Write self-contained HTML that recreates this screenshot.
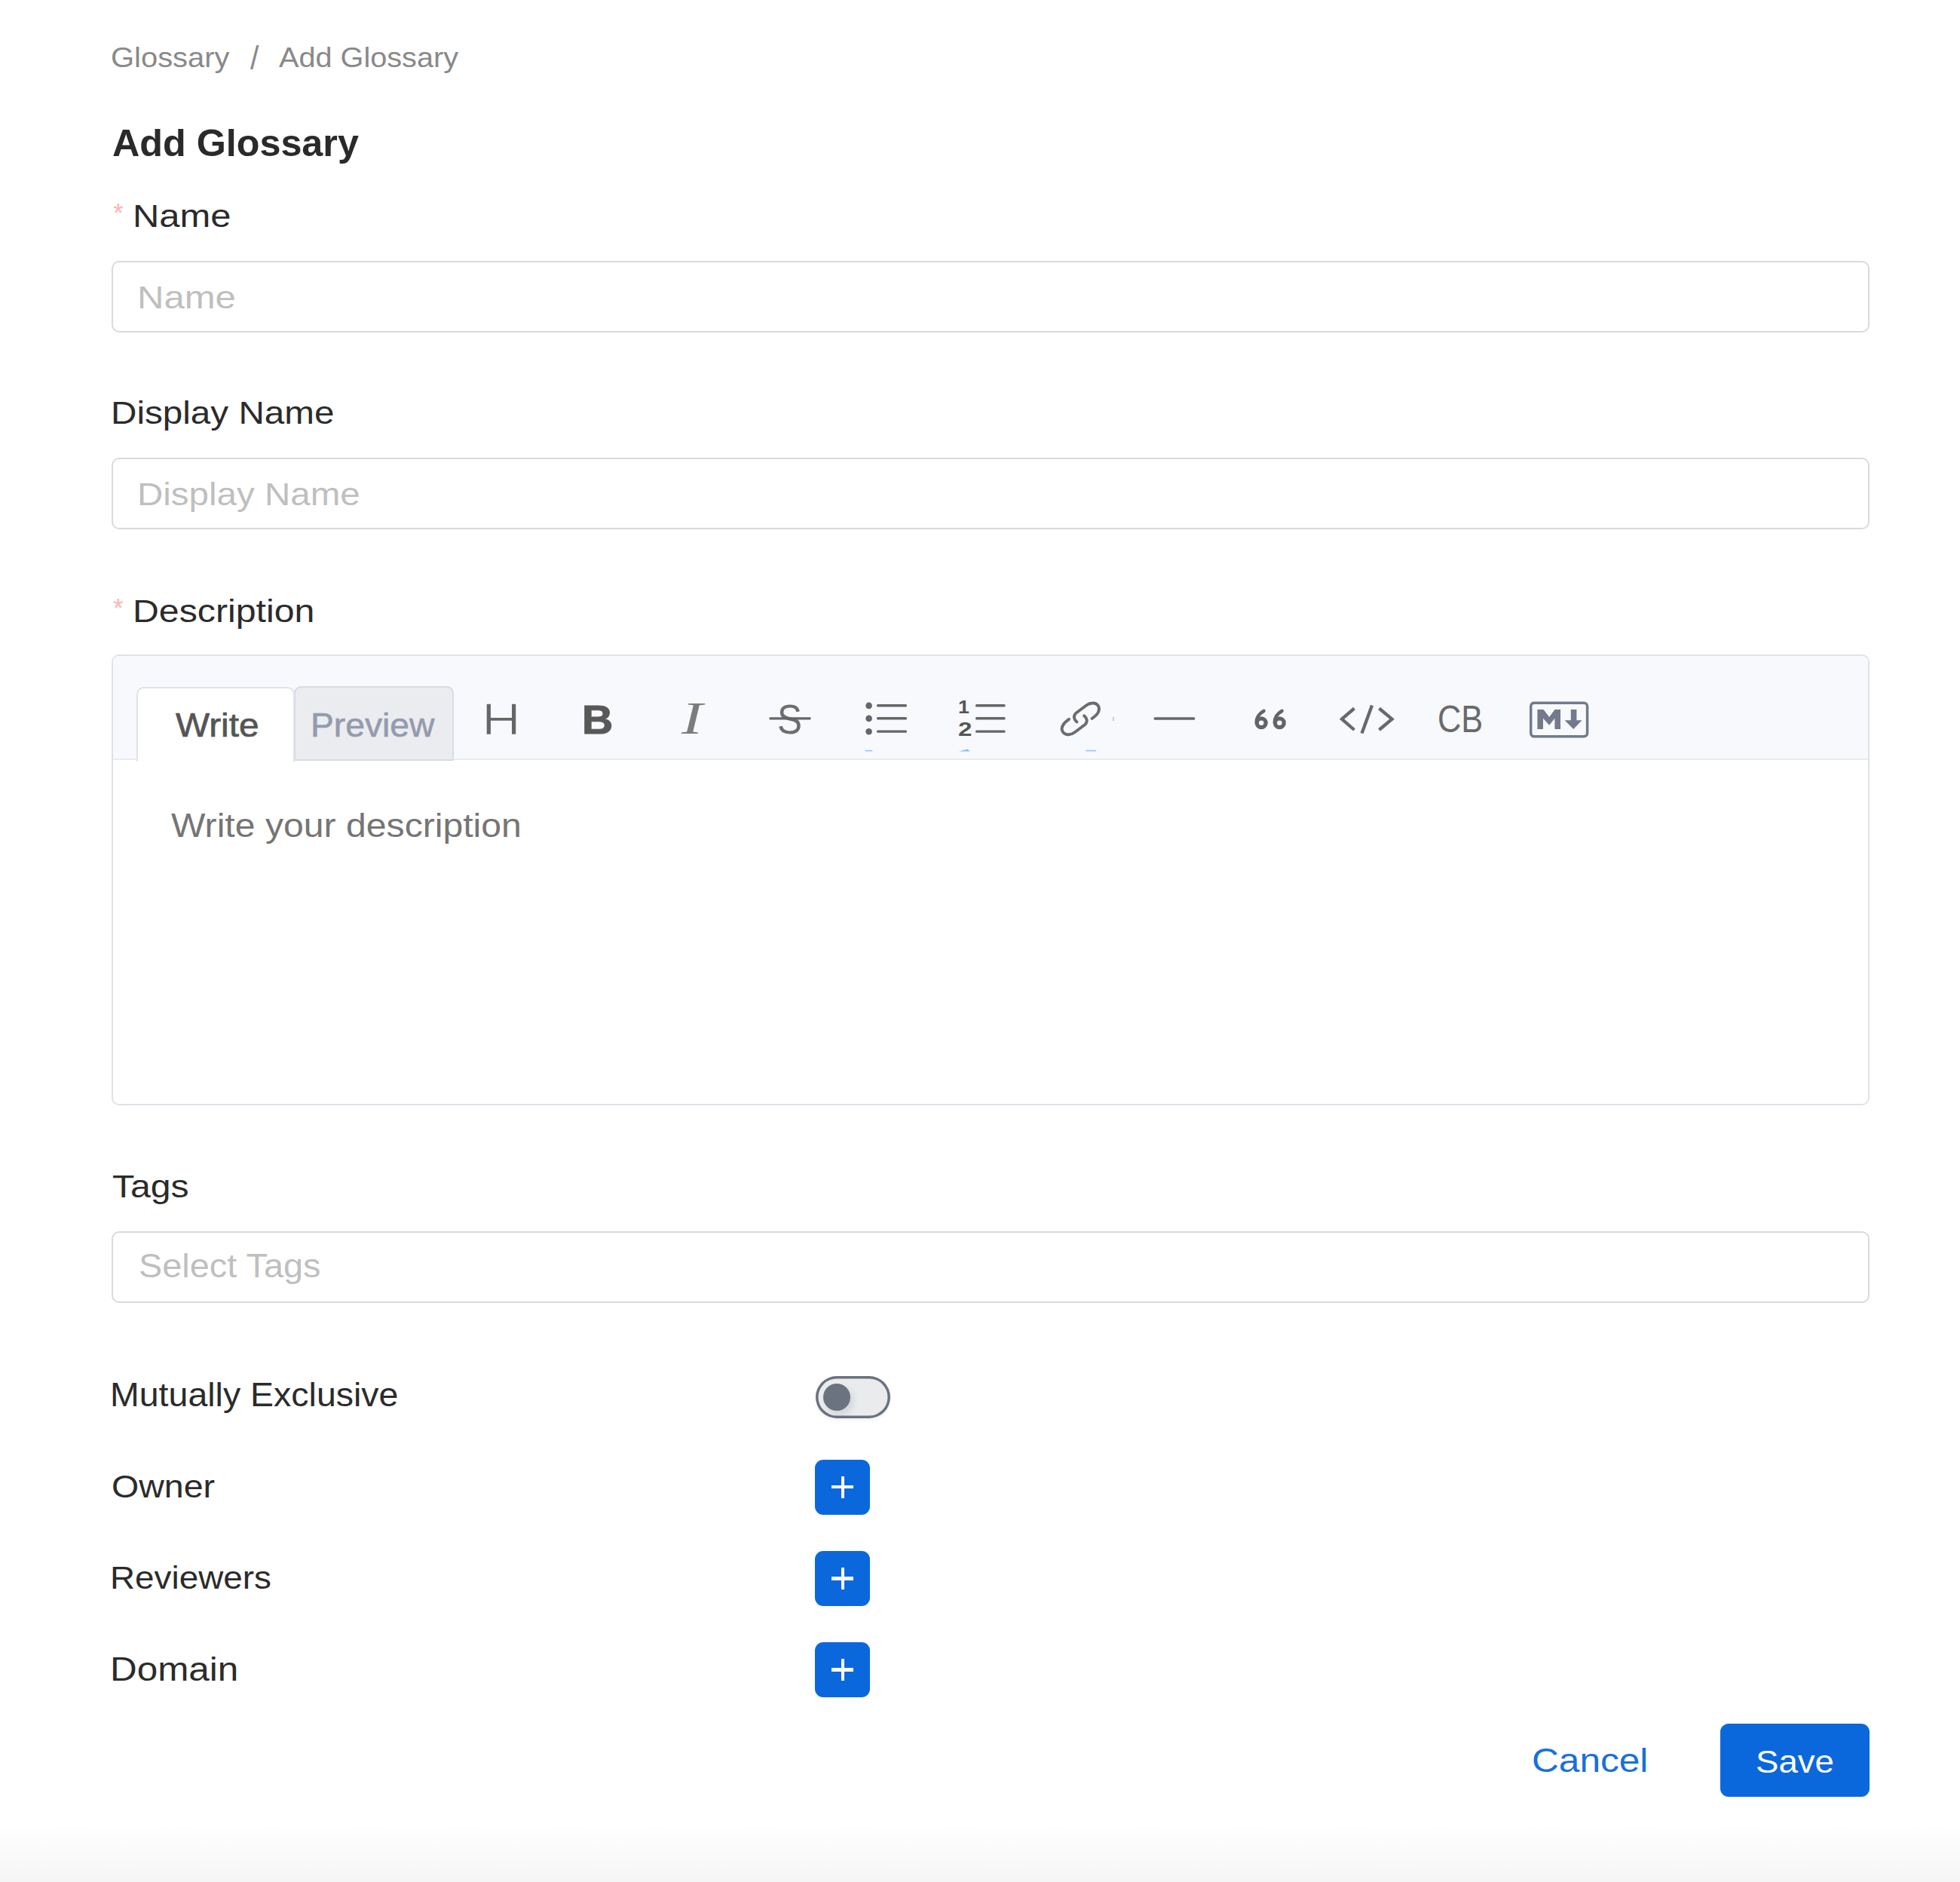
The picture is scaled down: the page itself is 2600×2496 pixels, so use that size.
<!DOCTYPE html>
<html><head><meta charset="utf-8"><title>Add Glossary</title>
<style>
html,body{margin:0;padding:0;}
body{width:2600px;height:2496px;position:relative;overflow:hidden;background:#fff;font-family:"Liberation Sans",sans-serif;}
.t{position:absolute;white-space:nowrap;transform-origin:0 0;font-family:"Liberation Sans",sans-serif;}
.abs{position:absolute;box-sizing:border-box;}
.inp{position:absolute;box-sizing:border-box;left:148px;width:2332px;height:95px;border:2px solid #dadada;border-radius:10px;background:#fff;}
.plus{position:absolute;left:1081.3px;width:73.2px;height:73px;border-radius:11px;background:#0b68dc;}
.plus:before{content:"";position:absolute;left:22.2px;top:34.2px;width:29px;height:4.8px;background:#fff;}
.plus:after{content:"";position:absolute;left:34.3px;top:22.1px;width:4.8px;height:29px;background:#fff;}

</style></head>
<body>
<div class="abs" style="left:0;top:2420px;width:2600px;height:76px;background:linear-gradient(to bottom,#ffffff 0%,#f5f5f5 100%);"></div>
<span class="t" style="left:150px;top:264px;font-size:35px;line-height:35px;color:#ffb3b3;">*</span>
<div class="inp" style="top:346px;"></div>
<div class="inp" style="top:607px;"></div>
<span class="t" style="left:150px;top:788px;font-size:35px;line-height:35px;color:#ffb3b3;">*</span>
<!-- editor -->
<div class="abs" style="left:148px;top:868px;width:2332px;height:598px;border:2px solid #dfe2ea;border-radius:10px;background:#fff;overflow:hidden;">
  <div class="abs" style="left:0;top:0;width:2328px;height:137.5px;background:#f7f9fc;border-bottom:2px solid #e9ebf1;"></div>
</div>
<div class="abs" style="left:390px;top:910px;width:211.5px;height:98.5px;background:#ebecf0;border:2px solid #d9dbe4;border-radius:9px 9px 0 0;"></div>
<div class="abs" style="left:181px;top:911px;width:209.5px;height:98.5px;background:#fff;border:2px solid #dfe2ea;border-bottom:none;border-radius:10px 10px 0 0;"></div>
<div class="inp" style="top:1633px;"></div>
<!-- switch -->
<div class="abs" style="left:1081.5px;top:1824.5px;width:99px;height:56px;border-radius:28px;background:#e9ebed;box-shadow:inset 0 0 0 3.5px #6b7280,0 3px 4px rgba(0,0,0,0.05);">
  <div class="abs" style="left:10.8px;top:10.6px;width:36px;height:36px;border-radius:50%;background:#6b7280;box-shadow:4px 5px 8px rgba(0,0,0,0.10);"></div>
</div>
<div class="plus" style="top:1935.5px;"></div>
<div class="plus" style="top:2057px;"></div>
<div class="plus" style="top:2178.3px;"></div>
<div class="abs" style="left:2281.5px;top:2285.5px;width:198.5px;height:97.5px;border-radius:11px;background:#0b68dc;"></div>

<span class="t" style="left:147.43px;top:57.84px;font-size:37.4px;line-height:37.4px;color:#898989;transform:scaleX(1.0679);">Glossary</span>
<span class="t" style="left:331.50px;top:57.94px;font-size:40px;line-height:40px;color:#898989;transform:scale(1.0222,1.1167);transform-origin:0 33.86px;">/</span>
<span class="t" style="left:370.00px;top:57.84px;font-size:37.4px;line-height:37.4px;color:#898989;transform:scaleX(1.0602);">Add Glossary</span>
<span class="t" style="left:148.51px;top:164.68px;font-size:50.0px;line-height:50.0px;color:#2a2a2a;transform:scaleX(1.0054);font-weight:bold;">Add Glossary</span>
<span class="t" style="left:175.98px;top:265.25px;font-size:43.3px;line-height:43.3px;color:#2b2b2b;transform:scaleX(1.1299);">Name</span>
<span class="t" style="left:181.67px;top:372.50px;font-size:43.0px;line-height:43.0px;color:#bfbfbf;transform:scaleX(1.1414);">Name</span>
<span class="t" style="left:146.68px;top:526.30px;font-size:43.0px;line-height:43.0px;color:#2b2b2b;transform:scaleX(1.1077);">Display Name</span>
<span class="t" style="left:182.29px;top:633.50px;font-size:43.0px;line-height:43.0px;color:#bfbfbf;transform:scaleX(1.1046);">Display Name</span>
<span class="t" style="left:176.03px;top:789.40px;font-size:43.0px;line-height:43.0px;color:#2b2b2b;transform:scaleX(1.1223);">Description</span>
<span class="t" style="left:232.60px;top:940.13px;font-size:44.5px;line-height:44.5px;color:#555555;transform:scaleX(1.0730);-webkit-text-stroke:0.7px #555555;">Write</span>
<span class="t" style="left:412.19px;top:940.13px;font-size:44.5px;line-height:44.5px;color:#949bad;transform:scaleX(1.0390);-webkit-text-stroke:0.6px #949bad;">Preview</span>
<span class="t" style="left:227.20px;top:1073.03px;font-size:44.5px;line-height:44.5px;color:#757575;transform:scaleX(1.0824);">Write your description</span>
<span class="t" style="left:149.25px;top:1551.90px;font-size:43.0px;line-height:43.0px;color:#2b2b2b;transform:scaleX(1.1192);">Tags</span>
<span class="t" style="left:184.03px;top:1658.29px;font-size:43.6px;line-height:43.6px;color:#bfbfbf;transform:scaleX(1.0756);">Select Tags</span>
<span class="t" style="left:146.37px;top:1828.79px;font-size:43.6px;line-height:43.6px;color:#2b2b2b;transform:scaleX(1.0667);">Mutually Exclusive</span>
<span class="t" style="left:147.82px;top:1950.79px;font-size:42.3px;line-height:42.3px;color:#2b2b2b;transform:scaleX(1.0997);">Owner</span>
<span class="t" style="left:146.42px;top:2072.08px;font-size:42.2px;line-height:42.2px;color:#2b2b2b;transform:scaleX(1.0864);">Reviewers</span>
<span class="t" style="left:146.14px;top:2192.79px;font-size:43.6px;line-height:43.6px;color:#2b2b2b;transform:scaleX(1.1338);">Domain</span>
<span class="t" style="left:2032.08px;top:2314.19px;font-size:43.6px;line-height:43.6px;color:#1a6fdc;transform:scaleX(1.1376);">Cancel</span>
<span class="t" style="left:2328.97px;top:2314.95px;font-size:42.7px;line-height:42.7px;color:#ffffff;transform:scaleX(1.0683);">Save</span>
<span class="t" style="left:771.63px;top:923.80px;font-size:58px;line-height:58px;color:#585858;transform:scale(0.9848,0.9392);font-weight:bold;transform-origin:0 49.10px;-webkit-text-stroke:1.2px #585858;">B</span>
<span class="t" style="left:904.02px;top:924.60px;font-size:58px;line-height:58px;color:#7c7c7c;transform:scale(1.4566,1.0483);font-style:italic;font-family:'Liberation Serif';transform-origin:0 49.10px;">I</span>
<span class="t" style="left:1031.45px;top:924.23px;font-size:58px;line-height:58px;color:#6e6e6e;transform:scale(0.8537,0.9595);transform-origin:0 49.10px;">S</span>
<span class="t" style="left:1907.47px;top:928.50px;font-size:50px;line-height:50px;color:#6a6a6a;transform:scale(0.8675,0.9934);transform-origin:0 42.33px;">CB</span>
<span class="t" style="left:1271.33px;top:926.48px;font-size:24px;line-height:24px;color:#555555;transform:scale(1.1161,1.0182);font-weight:bold;transform-origin:0 20.32px;">1</span>
<span class="t" style="left:1270.90px;top:955.98px;font-size:24px;line-height:24px;color:#555555;transform:scale(1.3793,1.0893);font-weight:bold;transform-origin:0 20.32px;">2</span>
<svg class="abs" style="left:0;top:0;" width="2600" height="2496" viewBox="0 0 2600 2496">
<g fill="#666666">
<!-- H -->
<rect x="645.7" y="933.8" width="5.2" height="39.9"/><rect x="679" y="933.8" width="5.2" height="39.9"/><rect x="648" y="952" width="34" height="3.7"/>
<!-- strike line -->
<rect x="1020.5" y="951.3" width="55" height="3.3" rx="1"/>
<!-- UL -->
<circle cx="1152.6" cy="935.9" r="4.3"/><circle cx="1152.6" cy="952.9" r="4.3"/><circle cx="1152.6" cy="970.3" r="4.3"/>
<rect x="1163" y="934" width="40" height="3.4" rx="1.5"/><rect x="1163" y="951" width="40" height="3.4" rx="1.5"/><rect x="1163" y="968.4" width="40" height="3.4" rx="1.5"/>
<!-- OL lines -->
<rect x="1294" y="934" width="39.6" height="3.4" rx="1.5"/><rect x="1294" y="951" width="39.6" height="3.4" rx="1.5"/><rect x="1294" y="968.4" width="39.6" height="3.4" rx="1.5"/>
<!-- HR -->
<rect x="1530.6" y="951.2" width="54.6" height="3.5" rx="1.5"/>
<!-- tick -->
<rect x="1476.2" y="951" width="1.4" height="5" fill="#b5b8c0"/>
</g>
<!-- link -->
<g fill="none" stroke="#6c6c6c" stroke-width="3.9" stroke-linecap="round" stroke-linejoin="round">
<path d="M1428.5 957.5 C1424.5 954 1423.5 950 1427 946 L1441 935.5 C1447 931 1455 931.5 1457.5 937.5 C1459.5 943 1455 948.5 1448.5 953"/>
<path d="M1438.1 949.3 C1442.1 952.8 1443.1 956.8 1439.6 960.8 L1425.6 971.3 C1419.6 975.8 1411.6 975.3 1409.1 969.3 C1407.1 963.8 1411.6 958.3 1418.1 953.8"/>
</g>
<!-- quote 66 -->
<g fill="none" stroke="#646464" stroke-linecap="round">
<circle cx="1673.2" cy="958.8" r="5.9" stroke-width="5.3"/>
<path d="M1676.4 943 Q1666.6 948.5 1666.8 958" stroke-width="4.6"/>
<circle cx="1697.3" cy="958.8" r="5.9" stroke-width="5.3"/>
<path d="M1700.5 943 Q1690.7 948.5 1690.9 958" stroke-width="4.6"/>
</g>
<!-- code -->
<g fill="none" stroke="#686868" stroke-width="4.3" stroke-linecap="butt" stroke-linejoin="miter">
<polyline points="1796.5,939.5 1780,953.7 1796.5,968"/>
<line x1="1820" y1="935.5" x2="1806.5" y2="972.5"/>
<polyline points="1829.5,939.5 1846.5,953.7 1829.5,968"/>
</g>
<!-- markdown -->
<rect x="2030.7" y="932.2" width="74.9" height="44.6" rx="4.5" fill="none" stroke="#727a8c" stroke-width="3.5"/>
<g fill="#727a8c">
<polygon points="2039.4,966.9 2039.4,940.9 2047.5,940.9 2055.2,951 2062.5,940.9 2070,940.9 2070,966.9 2062.4,966.9 2062.4,952.8 2055.2,961.8 2047,952.8 2047,966.9"/>
<polygon points="2083.8,940.9 2091.4,940.9 2091.4,955.2 2098.6,955.2 2087.2,966.9 2075.6,955.2 2083.8,955.2"/>
</g>
<!-- sprite bleed artefacts -->
<g fill="#6fb6ff">
<rect x="1147.5" y="994.8" width="10" height="1.6" rx="0.8" opacity="0.7"/>
<polygon points="1272,996.6 1286,996.6 1284,993.6" opacity="0.9"/>
<rect x="1440" y="994.8" width="14" height="1.7" rx="0.8" opacity="0.7"/>
</g>
</svg>

</body></html>
